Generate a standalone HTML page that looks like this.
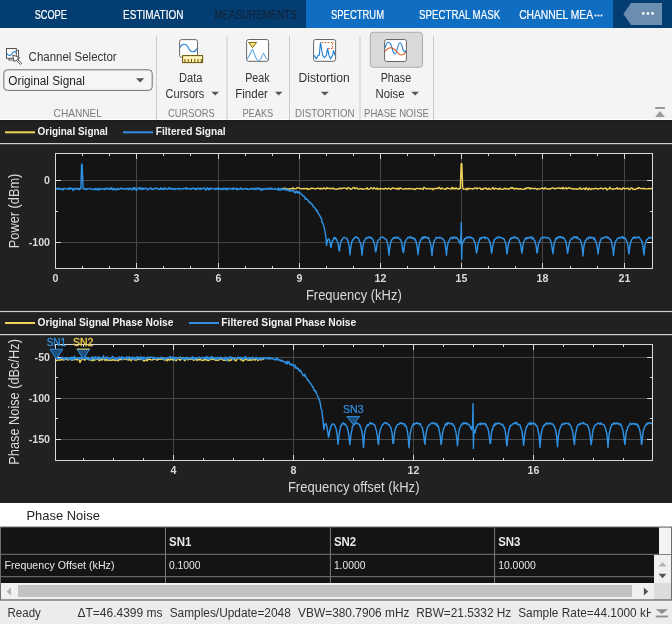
<!DOCTYPE html>
<html><head><meta charset="utf-8"><style>
html,body{margin:0;padding:0;width:672px;height:624px;overflow:hidden;background:#212121}
svg{display:block;will-change:transform}
text{font-family:"Liberation Sans", sans-serif}
</style></head><body>
<svg width="672" height="624" viewBox="0 0 672 624">
<rect x="0" y="0" width="672" height="28" fill="#043d72"/>
<rect x="306" y="0" width="307" height="28" fill="#106ec2"/>
<text x="34.7" y="19.3" font-size="12" fill="#ffffff" font-weight="400" text-anchor="start" textLength="32.2" lengthAdjust="spacingAndGlyphs" stroke="#ffffff" stroke-width="0.2">SCOPE</text>
<text x="123.1" y="19.3" font-size="12" fill="#ffffff" font-weight="400" text-anchor="start" textLength="60.3" lengthAdjust="spacingAndGlyphs" stroke="#ffffff" stroke-width="0.2">ESTIMATION</text>
<text x="214.5" y="19.3" font-size="12" fill="#13253b" font-weight="400" text-anchor="start" textLength="82.2" lengthAdjust="spacingAndGlyphs" stroke="#13253b" stroke-width="0.25">MEASUREMENTS</text>
<text x="331" y="19.3" font-size="12" fill="#ffffff" font-weight="400" text-anchor="start" textLength="53" lengthAdjust="spacingAndGlyphs" stroke="#ffffff" stroke-width="0.2">SPECTRUM</text>
<text x="419.1" y="19.3" font-size="12" fill="#ffffff" font-weight="400" text-anchor="start" textLength="81" lengthAdjust="spacingAndGlyphs" stroke="#ffffff" stroke-width="0.2">SPECTRAL MASK</text>
<text x="519.2" y="19.3" font-size="12" fill="#ffffff" font-weight="400" text-anchor="start" textLength="73.8" lengthAdjust="spacingAndGlyphs" stroke="#ffffff" stroke-width="0.2">CHANNEL MEA</text>
<rect x="594.6" y="14.6" width="1.8" height="1.8" fill="#fff"/><rect x="597.6" y="14.6" width="1.8" height="1.8" fill="#fff"/><rect x="600.6" y="14.6" width="1.8" height="1.8" fill="#fff"/>
<path d="M623.4 14 L631 3 L662 3 L662 25 L631 25 Z" fill="#6a8db0"/>
<circle cx="643.3" cy="13.4" r="1.35" fill="#fff"/><circle cx="647.9" cy="13.4" r="1.35" fill="#fff"/><circle cx="652.6" cy="13.4" r="1.35" fill="#fff"/>
<rect x="0" y="28" width="672" height="92" fill="#f4f4f4"/>
<rect x="0" y="119" width="672" height="1.3" fill="#ffffff"/>
<rect x="156" y="36" width="1" height="84" fill="#cbcbcb"/>
<rect x="226.5" y="36" width="1" height="84" fill="#cbcbcb"/>
<rect x="289" y="36" width="1" height="84" fill="#cbcbcb"/>
<rect x="359.5" y="36" width="1" height="84" fill="#cbcbcb"/>
<rect x="433" y="36" width="1" height="84" fill="#cbcbcb"/>
<rect x="8.9" y="50.4" width="9.6" height="9.6" fill="#fff" stroke="#555" stroke-width="1"/>
<rect x="6.5" y="48.5" width="9.8" height="9.8" fill="#fff" stroke="#555" stroke-width="1"/>
<path d="M7 53.5 C8.5 56 10.5 56.2 12 53.5 C13 51.5 15 51 16 52.5" fill="none" stroke="#1f7fd0" stroke-width="1.1"/>
<path d="M12.7 55 L19.6 57.6 L17.3 59.0 L21.8 63.2 L20.4 64.4 L16.1 60.2 L14.2 61.8 Z" fill="#fff" stroke="#444" stroke-width="0.9" stroke-linejoin="round"/>
<text x="28.6" y="61" font-size="12.5" fill="#333333" font-weight="400" text-anchor="start" textLength="88.1" lengthAdjust="spacingAndGlyphs" >Channel Selector</text>
<rect x="3.8" y="69.8" width="148.4" height="20.6" rx="3.5" fill="#f5f5f5" stroke="#6e6e6e" stroke-width="1"/>
<text x="8.3" y="85.2" font-size="12.5" fill="#222222" font-weight="400" text-anchor="start" textLength="76.7" lengthAdjust="spacingAndGlyphs" >Original Signal</text>
<path d="M136 78.2 L144.2 78.2 L140.1 82.4 Z" fill="#555"/>
<text x="53.6" y="116.9" font-size="11" fill="#7b7b7b" font-weight="400" text-anchor="start" textLength="48.3" lengthAdjust="spacingAndGlyphs" >CHANNEL</text>
<rect x="179.6" y="39.6" width="17.9" height="17.6" rx="2" fill="#fff" stroke="#666" stroke-width="1"/>
<path d="M180 47.5 C182 43 186.5 43 188.5 48 C190.5 53 195 53 197 48.5" fill="none" stroke="#1f7fd0" stroke-width="1.1"/>
<rect x="182.6" y="55.6" width="20" height="7" fill="#fff3b8" stroke="#6b5300" stroke-width="1"/>
<rect x="184.50" y="59" width="1" height="3.5" fill="#6b5300"/>
<rect x="187.75" y="59" width="1" height="3.5" fill="#6b5300"/>
<rect x="191.00" y="59" width="1" height="3.5" fill="#6b5300"/>
<rect x="194.25" y="59" width="1" height="3.5" fill="#6b5300"/>
<rect x="197.50" y="59" width="1" height="3.5" fill="#6b5300"/>
<rect x="200.75" y="59" width="1" height="3.5" fill="#6b5300"/>
<text x="179" y="82.3" font-size="12.5" fill="#333333" font-weight="400" text-anchor="start" textLength="23.4" lengthAdjust="spacingAndGlyphs" >Data</text>
<text x="165.5" y="97.5" font-size="12.5" fill="#333333" font-weight="400" text-anchor="start" textLength="38.8" lengthAdjust="spacingAndGlyphs" >Cursors</text>
<path d="M211.4 91.8 L219 91.8 L215.2 95.6 Z" fill="#555"/>
<text x="167.9" y="116.9" font-size="11" fill="#7b7b7b" font-weight="400" text-anchor="start" textLength="46.9" lengthAdjust="spacingAndGlyphs" >CURSORS</text>
<rect x="246.6" y="39.5" width="22" height="21.8" rx="2" fill="#fff" stroke="#666" stroke-width="1"/>
<path d="M247 59 C249.5 57 251 51 252.5 49.3 C254 51 255.5 60.5 258.7 60.5 C261.5 60.5 262.5 53.2 263.5 53.2 C264.5 55.5 266 59 268 59.5" fill="none" stroke="#3a94e0" stroke-width="1"/>
<path d="M248.6 42.5 L256.6 42.5 L252.6 47.6 Z" fill="#f7e27a" stroke="#7a5d00" stroke-width="0.9"/>
<text x="245.2" y="82.3" font-size="12.5" fill="#333333" font-weight="400" text-anchor="start" textLength="24.3" lengthAdjust="spacingAndGlyphs" >Peak</text>
<text x="235.2" y="97.5" font-size="12.5" fill="#333333" font-weight="400" text-anchor="start" textLength="32.7" lengthAdjust="spacingAndGlyphs" >Finder</text>
<path d="M275 91.8 L282.4 91.8 L278.7 95.6 Z" fill="#555"/>
<text x="242.4" y="116.9" font-size="11" fill="#7b7b7b" font-weight="400" text-anchor="start" textLength="30.9" lengthAdjust="spacingAndGlyphs" >PEAKS</text>
<rect x="313.6" y="39.5" width="22" height="21.8" rx="2" fill="#fff" stroke="#666" stroke-width="1"/>
<path d="M314 55.4 L316.4 58.6 L318 55.4 L319.3 55 L320.5 42.3 L322.5 55 L324.5 57.5 L326.5 55 L327.5 48.3 L329 55.4 L330.5 58.6 L332.5 55.6 L333.5 50.5 L335 55.4" fill="none" stroke="#1f7fd0" stroke-width="1.1"/>
<path d="M321.5 42.5 L334 42.5 M332.6 43 L332.6 48.3 M328 48.5 L334 48.5" fill="none" stroke="#e05a1a" stroke-width="1" stroke-dasharray="1.6 1.4"/>
<text x="298.6" y="82.3" font-size="12.5" fill="#333333" font-weight="400" text-anchor="start" textLength="51.2" lengthAdjust="spacingAndGlyphs" >Distortion</text>
<path d="M320.9 91.8 L328.8 91.8 L324.85 95.6 Z" fill="#555"/>
<text x="295" y="116.9" font-size="11" fill="#7b7b7b" font-weight="400" text-anchor="start" textLength="59.5" lengthAdjust="spacingAndGlyphs" >DISTORTION</text>
<rect x="370.3" y="32.3" width="52.2" height="35" rx="3" fill="#d9d9d9" stroke="#ababab" stroke-width="1"/>
<rect x="384.6" y="39.5" width="21.8" height="22" rx="2" fill="#fff" stroke="#666" stroke-width="1"/>
<path d="M385 48 C387 40 390 40.5 392 48 C394 56 396 56 397.5 48 C399 41 401 41 402.5 48 C404 53 405.5 53 406 50" fill="none" stroke="#1f7fd0" stroke-width="1.1"/>
<path d="M385 51.5 C389 46 393 47 397 52 C400 56 403 56 406 52" fill="none" stroke="#e05a1a" stroke-width="1.1"/>
<text x="380.7" y="82.3" font-size="12.5" fill="#333333" font-weight="400" text-anchor="start" textLength="30.5" lengthAdjust="spacingAndGlyphs" >Phase</text>
<text x="375.5" y="97.5" font-size="12.5" fill="#333333" font-weight="400" text-anchor="start" textLength="29" lengthAdjust="spacingAndGlyphs" >Noise</text>
<path d="M411.2 91.8 L419 91.8 L415.1 95.6 Z" fill="#555"/>
<text x="364" y="116.9" font-size="11" fill="#7b7b7b" font-weight="400" text-anchor="start" textLength="65" lengthAdjust="spacingAndGlyphs" >PHASE NOISE</text>
<rect x="655.2" y="107" width="9.7" height="2" fill="#9a9a9a"/><path d="M655.2 117 L664.9 117 L660.05 111 Z" fill="#9a9a9a"/>
<rect x="0" y="120.3" width="672" height="382.7" fill="#212121"/>
<rect x="0" y="120.3" width="672" height="1" fill="#161616"/>
<rect x="5" y="131.3" width="30" height="2" fill="#f0d458"/>
<text x="37.5" y="135.1" font-size="10" fill="#f2f2f2" font-weight="700" text-anchor="start" textLength="70.4" lengthAdjust="spacingAndGlyphs" >Original Signal</text>
<rect x="123" y="131.3" width="30" height="2" fill="#2f8fe0"/>
<text x="155.7" y="135.1" font-size="10" fill="#f2f2f2" font-weight="700" text-anchor="start" textLength="70" lengthAdjust="spacingAndGlyphs" >Filtered Signal</text>
<rect x="0" y="143" width="672" height="1.2" fill="#cfcfcf"/>
<rect x="5" y="322" width="30" height="2" fill="#f0d458"/>
<text x="37.5" y="326.0" font-size="10" fill="#f2f2f2" font-weight="700" text-anchor="start" textLength="135.9" lengthAdjust="spacingAndGlyphs" >Original Signal Phase Noise</text>
<rect x="189" y="322" width="30" height="2" fill="#2f8fe0"/>
<text x="221.3" y="326.0" font-size="10" fill="#f2f2f2" font-weight="700" text-anchor="start" textLength="135" lengthAdjust="spacingAndGlyphs" >Filtered Signal Phase Noise</text>
<rect x="0" y="310.9" width="672" height="1.2" fill="#cfcfcf"/>
<rect x="0" y="334" width="672" height="1.2" fill="#cfcfcf"/>
<rect x="55" y="153" width="598" height="115" fill="#141414"/>
<rect x="136" y="153" width="1" height="115" fill="#474747"/>
<rect x="218" y="153" width="1" height="115" fill="#474747"/>
<rect x="299" y="153" width="1" height="115" fill="#474747"/>
<rect x="380" y="153" width="1" height="115" fill="#474747"/>
<rect x="461" y="153" width="1" height="115" fill="#474747"/>
<rect x="542" y="153" width="1" height="115" fill="#474747"/>
<rect x="624" y="153" width="1" height="115" fill="#474747"/>
<rect x="55" y="180" width="598" height="1" fill="#474747"/>
<rect x="55" y="242" width="598" height="1" fill="#474747"/>
<defs><clipPath id="c1"><rect x="55" y="153" width="597" height="115"/></clipPath></defs>
<g clip-path="url(#c1)" fill="none" stroke-linejoin="round">
<path d="M281.00 188.47 L282.00 188.86 L283.00 188.49 L284.00 188.44 L285.00 188.13 L286.00 188.49 L287.00 189.16 L288.00 188.81 L289.00 189.12 L290.00 188.72 L291.00 188.80 L292.00 188.69 L293.00 187.77 L294.00 189.03 L295.00 188.85 L296.00 188.85 L297.00 187.75 L298.00 187.73 L299.00 188.16 L300.00 188.37 L301.00 188.75 L302.00 188.58 L303.00 188.86 L304.00 188.28 L305.00 188.75 L306.00 188.80 L307.00 188.27 L308.00 189.46 L309.00 188.88 L310.00 189.20 L311.00 188.29 L312.00 188.23 L313.00 188.43 L314.00 188.55 L315.00 188.92 L316.00 188.72 L317.00 188.38 L318.00 188.12 L319.00 188.34 L320.00 189.21 L321.00 188.20 L322.00 188.72 L323.00 188.81 L324.00 187.86 L325.00 188.62 L326.00 189.25 L327.00 187.59 L328.00 188.44 L329.00 188.55 L330.00 188.19 L331.00 188.85 L332.00 188.57 L333.00 187.87 L334.00 189.01 L335.00 188.93 L336.00 189.07 L337.00 189.32 L338.00 188.78 L339.00 188.66 L340.00 187.95 L341.00 188.91 L342.00 188.29 L343.00 188.37 L344.00 187.97 L345.00 188.12 L346.00 188.33 L347.00 189.24 L348.00 187.58 L349.00 187.87 L350.00 188.72 L351.00 189.32 L352.00 188.89 L353.00 187.65 L354.00 187.34 L355.00 188.78 L356.00 188.23 L357.00 188.04 L358.00 189.09 L359.00 189.15 L360.00 188.68 L361.00 188.72 L362.00 188.82 L363.00 189.40 L364.00 188.91 L365.00 188.86 L366.00 188.87 L367.00 187.82 L368.00 189.24 L369.00 189.08 L370.00 188.86 L371.00 187.61 L372.00 188.28 L373.00 189.02 L374.00 187.69 L375.00 188.51 L376.00 189.11 L377.00 187.94 L378.00 189.41 L379.00 188.88 L380.00 188.52 L381.00 188.76 L382.00 188.92 L383.00 188.66 L384.00 189.17 L385.00 188.27 L386.00 188.39 L387.00 189.12 L388.00 188.61 L389.00 188.16 L390.00 189.07 L391.00 189.33 L392.00 188.38 L393.00 187.91 L394.00 188.53 L395.00 188.53 L396.00 188.45 L397.00 189.30 L398.00 188.09 L399.00 189.23 L400.00 187.97 L401.00 188.21 L402.00 188.92 L403.00 189.16 L404.00 189.03 L405.00 188.77 L406.00 188.67 L407.00 188.68 L408.00 188.89 L409.00 188.51 L410.00 188.74 L411.00 188.89 L412.00 188.60 L413.00 188.98 L414.00 188.88 L415.00 189.61 L416.00 188.76 L417.00 188.39 L418.00 188.41 L419.00 188.59 L420.00 189.06 L421.00 188.43 L422.00 188.79 L423.00 189.52 L424.00 187.32 L425.00 188.04 L426.00 188.72 L427.00 188.80 L428.00 188.72 L429.00 188.38 L430.00 188.93 L431.00 188.74 L432.00 188.34 L433.00 189.82 L434.00 188.78 L435.00 188.32 L436.00 188.55 L437.00 188.49 L438.00 188.57 L439.00 187.24 L440.00 188.36 L441.00 189.10 L442.00 188.02 L443.00 188.57 L444.00 189.08 L445.00 189.03 L446.00 189.35 L447.00 187.75 L448.00 188.42 L449.00 188.43 L450.00 188.91 L451.00 189.15 L452.00 187.26 L453.00 189.14 L454.00 187.88 L455.00 188.94 L456.00 187.85 L457.00 188.69 L458.00 189.20 L459.00 188.53 L460.00 188.70 L460.30 188.30 L461.20 163.60 L461.80 163.60 L462.70 188.30 L463.00 188.56 L464.00 189.37 L465.00 189.12 L466.00 188.45 L467.00 189.97 L468.00 188.03 L469.00 189.06 L470.00 188.47 L471.00 188.67 L472.00 188.95 L473.00 188.71 L474.00 188.92 L475.00 187.84 L476.00 187.85 L477.00 188.91 L478.00 188.12 L479.00 188.09 L480.00 187.86 L481.00 189.23 L482.00 188.97 L483.00 189.34 L484.00 188.13 L485.00 188.60 L486.00 188.03 L487.00 188.98 L488.00 189.39 L489.00 188.15 L490.00 189.38 L491.00 189.09 L492.00 188.51 L493.00 187.61 L494.00 189.30 L495.00 188.55 L496.00 188.30 L497.00 188.80 L498.00 188.80 L499.00 189.35 L500.00 188.09 L501.00 189.17 L502.00 189.34 L503.00 189.33 L504.00 188.51 L505.00 188.23 L506.00 189.11 L507.00 188.66 L508.00 188.66 L509.00 189.31 L510.00 188.47 L511.00 187.45 L512.00 188.41 L513.00 187.67 L514.00 189.01 L515.00 188.76 L516.00 188.29 L517.00 188.60 L518.00 189.02 L519.00 188.64 L520.00 189.26 L521.00 188.57 L522.00 189.12 L523.00 189.35 L524.00 189.40 L525.00 188.26 L526.00 189.04 L527.00 187.66 L528.00 188.06 L529.00 187.62 L530.00 189.13 L531.00 187.98 L532.00 188.59 L533.00 188.50 L534.00 188.59 L535.00 188.30 L536.00 188.72 L537.00 189.50 L538.00 188.62 L539.00 188.87 L540.00 189.10 L541.00 188.50 L542.00 187.97 L543.00 188.32 L544.00 189.14 L545.00 187.78 L546.00 188.30 L547.00 189.10 L548.00 189.00 L549.00 188.60 L550.00 189.00 L551.00 188.68 L552.00 188.01 L553.00 187.82 L554.00 188.28 L555.00 189.06 L556.00 188.32 L557.00 188.15 L558.00 188.21 L559.00 187.83 L560.00 188.54 L561.00 188.01 L562.00 188.78 L563.00 187.42 L564.00 188.76 L565.00 188.28 L566.00 187.63 L567.00 188.96 L568.00 188.46 L569.00 187.48 L570.00 188.16 L571.00 188.75 L572.00 188.37 L573.00 188.99 L574.00 188.97 L575.00 188.93 L576.00 188.76 L577.00 189.27 L578.00 188.93 L579.00 188.83 L580.00 187.56 L581.00 189.05 L582.00 189.25 L583.00 188.45 L584.00 188.37 L585.00 189.57 L586.00 187.72 L587.00 188.83 L588.00 189.81 L589.00 188.14 L590.00 188.94 L591.00 189.54 L592.00 188.54 L593.00 188.88 L594.00 189.05 L595.00 188.15 L596.00 188.56 L597.00 188.75 L598.00 189.01 L599.00 188.58 L600.00 188.50 L601.00 188.09 L602.00 188.42 L603.00 189.05 L604.00 188.65 L605.00 188.17 L606.00 188.18 L607.00 189.93 L608.00 189.17 L609.00 188.92 L610.00 187.30 L611.00 188.91 L612.00 188.84 L613.00 189.44 L614.00 188.81 L615.00 188.57 L616.00 188.86 L617.00 187.63 L618.00 189.12 L619.00 188.76 L620.00 188.25 L621.00 189.26 L622.00 189.50 L623.00 187.90 L624.00 188.27 L625.00 188.75 L626.00 188.69 L627.00 188.40 L628.00 188.11 L629.00 189.66 L630.00 189.12 L631.00 188.00 L632.00 187.93 L633.00 189.45 L634.00 189.09 L635.00 189.51 L636.00 189.01 L637.00 188.16 L638.00 188.73 L639.00 187.52 L640.00 188.23 L641.00 188.57 L642.00 188.86 L643.00 188.24 L644.00 188.54 L645.00 188.83 L646.00 188.79 L647.00 188.92 L648.00 188.70 L649.00 188.44 L650.00 188.99 L651.00 188.62 L652.00 188.19" stroke="#f0d458" stroke-width="1.4"/>
<path d="M55.00 188.19 L55.50 188.99 L56.00 189.30 L56.50 188.54 L57.00 188.14 L57.50 188.77 L58.00 189.04 L58.50 189.35 L59.00 188.19 L59.50 188.15 L60.00 189.15 L60.50 189.04 L61.00 189.57 L61.50 189.29 L62.00 188.75 L62.50 188.66 L63.00 190.09 L63.50 188.66 L64.00 188.41 L64.50 188.23 L65.00 188.85 L65.50 188.87 L66.00 188.63 L66.50 188.77 L67.00 188.94 L67.50 189.15 L68.00 189.35 L68.50 188.90 L69.00 187.91 L69.50 189.15 L70.00 188.09 L70.50 188.71 L71.00 188.06 L71.50 188.80 L72.00 188.41 L72.50 188.91 L73.00 190.45 L73.50 188.78 L74.00 189.22 L74.50 188.14 L75.00 188.66 L75.50 189.13 L76.00 188.75 L76.50 188.99 L77.00 188.85 L77.50 188.30 L78.00 189.08 L78.50 188.39 L79.00 189.74 L79.50 188.55 L80.00 189.14 L80.50 188.80 L80.90 188.60 L81.60 164.20 L82.10 164.20 L83.10 188.60 L83.50 189.11 L84.00 188.87 L84.50 188.41 L85.00 189.18 L85.50 189.03 L86.00 189.62 L86.50 188.61 L87.00 189.08 L87.50 189.05 L88.00 188.94 L88.50 188.90 L89.00 188.89 L89.50 188.50 L90.00 188.29 L90.50 188.60 L91.00 189.10 L91.50 189.56 L92.00 189.29 L92.50 189.33 L93.00 189.19 L93.50 189.15 L94.00 188.89 L94.50 189.19 L95.00 189.69 L95.50 188.64 L96.00 188.45 L96.50 189.78 L97.00 188.92 L97.50 189.29 L98.00 189.24 L98.50 188.23 L99.00 190.02 L99.50 189.69 L100.00 188.89 L100.50 189.18 L101.00 188.86 L101.50 188.36 L102.00 188.74 L102.50 188.99 L103.00 189.36 L103.50 189.15 L104.00 188.83 L104.50 189.48 L105.00 188.42 L105.50 189.20 L106.00 189.36 L106.50 188.65 L107.00 187.90 L107.50 188.35 L108.00 188.92 L108.50 189.06 L109.00 189.57 L109.50 188.30 L110.00 188.80 L110.50 189.12 L111.00 188.72 L111.50 187.62 L112.00 189.20 L112.50 189.96 L113.00 189.30 L113.50 188.34 L114.00 188.59 L114.50 188.91 L115.00 190.04 L115.50 189.11 L116.00 188.86 L116.50 189.58 L117.00 188.76 L117.50 189.73 L118.00 188.46 L118.50 188.56 L119.00 189.16 L119.50 189.51 L120.00 189.13 L120.50 188.95 L121.00 187.89 L121.50 188.44 L122.00 188.49 L122.50 188.53 L123.00 189.09 L123.50 188.63 L124.00 189.19 L124.50 188.84 L125.00 188.63 L125.50 188.86 L126.00 189.01 L126.50 189.23 L127.00 188.56 L127.50 188.68 L128.00 188.12 L128.50 189.60 L129.00 189.53 L129.50 188.71 L130.00 188.56 L130.50 188.18 L131.00 188.88 L131.50 188.90 L132.00 189.89 L132.50 188.92 L133.00 188.41 L133.50 187.58 L134.00 189.50 L134.50 188.89 L135.00 188.00 L135.50 188.89 L136.00 188.00 L136.50 190.54 L137.00 189.36 L137.50 189.09 L138.00 188.71 L138.50 187.73 L139.00 188.74 L139.50 188.02 L140.00 189.10 L140.50 187.73 L141.00 188.35 L141.50 189.41 L142.00 189.62 L142.50 188.21 L143.00 188.03 L143.50 189.24 L144.00 189.23 L144.50 188.31 L145.00 188.45 L145.50 188.45 L146.00 188.21 L146.50 188.46 L147.00 189.43 L147.50 189.14 L148.00 189.83 L148.50 188.76 L149.00 188.73 L149.50 188.31 L150.00 188.74 L150.50 188.14 L151.00 187.91 L151.50 189.15 L152.00 189.52 L152.50 189.22 L153.00 189.47 L153.50 188.93 L154.00 188.44 L154.50 188.84 L155.00 188.61 L155.50 188.24 L156.00 187.95 L156.50 188.06 L157.00 188.80 L157.50 188.88 L158.00 188.56 L158.50 189.51 L159.00 188.89 L159.50 189.09 L160.00 189.41 L160.50 188.39 L161.00 187.82 L161.50 189.18 L162.00 188.46 L162.50 189.46 L163.00 188.97 L163.50 189.30 L164.00 189.18 L164.50 187.76 L165.00 189.16 L165.50 188.46 L166.00 188.42 L166.50 188.58 L167.00 189.18 L167.50 189.24 L168.00 189.31 L168.50 187.97 L169.00 188.50 L169.50 187.61 L170.00 188.75 L170.50 189.10 L171.00 188.42 L171.50 188.92 L172.00 188.92 L172.50 189.30 L173.00 188.39 L173.50 188.39 L174.00 188.42 L174.50 189.68 L175.00 189.35 L175.50 188.74 L176.00 188.91 L176.50 188.86 L177.00 188.90 L177.50 188.70 L178.00 188.63 L178.50 188.17 L179.00 188.48 L179.50 189.63 L180.00 189.07 L180.50 188.83 L181.00 188.69 L181.50 188.83 L182.00 188.98 L182.50 188.48 L183.00 188.90 L183.50 188.92 L184.00 188.43 L184.50 188.41 L185.00 188.30 L185.50 188.27 L186.00 189.24 L186.50 187.62 L187.00 188.67 L187.50 188.49 L188.00 188.49 L188.50 188.85 L189.00 189.36 L189.50 188.84 L190.00 188.73 L190.50 188.49 L191.00 188.74 L191.50 189.26 L192.00 188.60 L192.50 188.23 L193.00 188.17 L193.50 188.25 L194.00 188.11 L194.50 189.35 L195.00 188.98 L195.50 188.68 L196.00 189.53 L196.50 188.47 L197.00 189.18 L197.50 189.20 L198.00 188.03 L198.50 188.02 L199.00 188.34 L199.50 189.25 L200.00 189.45 L200.50 188.19 L201.00 189.32 L201.50 188.61 L202.00 188.60 L202.50 188.52 L203.00 188.64 L203.50 187.89 L204.00 188.30 L204.50 188.18 L205.00 189.05 L205.50 189.84 L206.00 190.17 L206.50 188.63 L207.00 187.94 L207.50 188.60 L208.00 188.33 L208.50 189.79 L209.00 189.09 L209.50 188.44 L210.00 189.27 L210.50 189.07 L211.00 187.99 L211.50 188.53 L212.00 188.68 L212.50 188.81 L213.00 188.87 L213.50 188.63 L214.00 188.89 L214.50 188.51 L215.00 188.35 L215.50 189.56 L216.00 188.98 L216.50 189.02 L217.00 188.00 L217.50 188.72 L218.00 189.21 L218.50 188.15 L219.00 189.35 L219.50 188.61 L220.00 189.00 L220.50 188.73 L221.00 188.91 L221.50 189.40 L222.00 188.60 L222.50 189.58 L223.00 188.41 L223.50 188.33 L224.00 189.16 L224.50 188.27 L225.00 188.61 L225.50 189.25 L226.00 189.41 L226.50 187.91 L227.00 189.05 L227.50 189.74 L228.00 189.40 L228.50 188.68 L229.00 188.50 L229.50 188.65 L230.00 188.22 L230.50 188.67 L231.00 188.71 L231.50 188.73 L232.00 189.39 L232.50 188.68 L233.00 188.07 L233.50 189.33 L234.00 188.26 L234.50 188.58 L235.00 188.73 L235.50 188.63 L236.00 188.30 L236.50 188.68 L237.00 189.89 L237.50 188.50 L238.00 188.73 L238.50 189.36 L239.00 189.17 L239.50 189.18 L240.00 189.23 L240.50 187.82 L241.00 188.37 L241.50 188.86 L242.00 189.05 L242.50 189.45 L243.00 189.03 L243.50 188.68 L244.00 188.82 L244.50 188.69 L245.00 188.92 L245.50 189.14 L246.00 188.63 L246.50 188.39 L247.00 188.37 L247.50 189.35 L248.00 189.44 L248.50 189.30 L249.00 189.23 L249.50 189.22 L250.00 188.80 L250.50 189.13 L251.00 188.27 L251.50 188.70 L252.00 188.43 L252.50 189.16 L253.00 188.51 L253.50 188.75 L254.00 189.00 L254.50 189.48 L255.00 188.40 L255.50 188.33 L256.00 189.21 L256.50 188.25 L257.00 189.03 L257.50 188.51 L258.00 188.75 L258.50 187.89 L259.00 189.16 L259.50 188.56 L260.00 188.37 L260.50 189.86 L261.00 189.18 L261.50 190.59 L262.00 189.05 L262.50 188.68 L263.00 188.92 L263.50 189.68 L264.00 188.87 L264.50 189.12 L265.00 189.17 L265.50 188.46 L266.00 188.99 L266.50 188.69 L267.00 188.33 L267.50 189.40 L268.00 189.30 L268.50 189.02 L269.00 188.54 L269.50 188.00 L270.00 189.26 L270.50 188.98 L271.00 188.19 L271.50 189.02 L272.00 188.30 L272.50 189.05 L273.00 189.15 L273.50 189.27 L274.00 189.21 L274.50 189.20 L275.00 188.55 L275.50 188.94 L276.00 188.89 L276.50 189.03 L277.00 189.30 L277.50 189.48 L278.00 190.00 L278.50 187.91 L279.00 189.41 L279.50 189.12 L280.00 190.37 L280.50 189.70 L281.00 188.42 L281.50 189.47 L282.00 189.04 L282.50 189.84 L283.00 188.86 L283.50 189.39 L284.00 189.44 L284.50 189.52 L285.00 189.36 L285.50 188.82 L286.00 190.06 L286.50 190.43 L287.00 190.00 L287.50 189.63 L288.00 190.34 L288.50 190.63 L289.00 190.36 L289.50 190.54 L290.00 191.36 L290.50 190.19 L291.00 190.58 L291.50 190.01 L292.00 190.71 L292.50 190.79 L293.00 190.79 L293.50 191.02 L294.00 192.37 L294.50 191.48 L295.00 191.62 L295.50 192.88 L296.00 191.85 L296.50 191.12 L297.00 192.29 L297.50 191.72 L298.00 193.15 L298.50 191.89 L299.00 192.43 L299.50 192.17 L300.00 193.29 L300.50 193.06 L301.00 193.89 L301.50 194.12 L302.00 194.42 L302.50 195.65 L303.00 196.14 L303.50 196.20 L304.00 196.21 L304.50 196.62 L305.00 197.79 L305.50 199.34 L306.00 198.41 L306.50 198.74 L307.00 199.28 L307.50 199.58 L308.00 200.14 L308.50 201.02 L309.00 202.35 L309.50 202.15 L310.00 202.41 L310.50 202.38 L311.00 203.81 L311.50 204.22 L312.00 204.16 L312.50 204.76 L313.00 205.83 L313.50 206.90 L314.00 207.25 L314.50 207.60 L315.00 207.92 L315.50 208.88 L316.00 209.37 L316.50 211.16 L317.00 210.24 L317.50 211.39 L318.00 213.02 L318.50 213.10 L319.00 214.82 L319.50 215.06 L320.00 216.21 L320.50 217.05 L321.00 217.69 L321.50 219.08 L322.00 222.03 L322.50 222.76 L323.00 223.60 L323.50 225.28 L324.00 226.58 L324.50 229.19 L325.00 231.52 L325.50 234.52 L326.00 238.09 L326.50 245.64 L327.00 242.36 L327.50 240.81 L328.00 239.26 L328.50 238.91 L329.00 238.99 L329.50 240.08 L330.00 242.33 L330.50 245.97 L331.00 247.51 L331.50 244.50 L332.00 242.24 L332.50 240.81 L333.00 239.98 L333.50 239.40 L334.00 237.48 L334.50 238.47 L335.00 237.64 L335.50 237.85 L336.00 239.49 L336.50 238.98 L337.00 240.88 L337.50 241.81 L338.00 242.85 L338.50 246.31 L339.00 250.42 L339.50 251.06 L340.00 245.84 L340.50 243.82 L341.00 241.85 L341.50 240.01 L342.00 240.31 L342.50 238.66 L343.00 238.08 L343.50 237.76 L344.00 237.31 L344.50 237.17 L345.00 237.64 L345.50 237.93 L346.00 237.86 L346.50 238.49 L347.00 238.54 L347.50 240.29 L348.00 240.98 L348.50 243.21 L349.00 245.28 L349.50 249.17 L350.00 254.90 L350.50 248.88 L351.00 246.86 L351.50 243.19 L352.00 241.40 L352.50 239.85 L353.00 240.01 L353.50 239.28 L354.00 238.33 L354.50 237.26 L355.00 237.43 L355.50 237.78 L356.00 237.20 L356.50 236.98 L357.00 237.13 L357.50 237.54 L358.00 238.23 L358.50 238.39 L359.00 239.35 L359.50 241.50 L360.00 242.33 L360.50 242.89 L361.00 246.13 L361.50 249.80 L362.00 255.24 L362.50 250.27 L363.00 245.89 L363.50 243.30 L364.00 241.48 L364.50 240.34 L365.00 240.06 L365.50 239.18 L366.00 237.76 L366.50 237.82 L367.00 237.41 L367.50 237.96 L368.00 237.57 L368.50 237.80 L369.00 237.35 L369.50 236.58 L370.00 237.74 L370.50 237.79 L371.00 238.14 L371.50 237.63 L372.00 238.67 L372.50 238.89 L373.00 239.68 L373.50 241.25 L374.00 242.81 L374.50 244.48 L375.00 247.35 L375.50 251.73 L376.00 251.49 L376.50 247.87 L377.00 244.33 L377.50 241.25 L378.00 240.42 L378.50 239.96 L379.00 239.79 L379.50 239.03 L380.00 238.28 L380.50 237.92 L381.00 237.15 L381.50 237.29 L382.00 237.26 L382.50 237.04 L383.00 237.48 L383.50 237.39 L384.00 237.89 L384.50 238.63 L385.00 238.66 L385.50 238.99 L386.00 239.34 L386.50 239.67 L387.00 241.57 L387.50 243.67 L388.00 245.57 L388.50 250.35 L389.00 255.15 L389.50 249.97 L390.00 245.91 L390.50 242.91 L391.00 242.61 L391.50 239.90 L392.00 239.94 L392.50 238.63 L393.00 238.54 L393.50 237.70 L394.00 237.62 L394.50 238.04 L395.00 238.37 L395.50 237.03 L396.00 237.36 L396.50 237.80 L397.00 237.15 L397.50 237.86 L398.00 237.34 L398.50 238.18 L399.00 238.39 L399.50 239.13 L400.00 239.28 L400.50 239.31 L401.00 241.17 L401.50 241.82 L402.00 244.73 L402.50 248.07 L403.00 252.02 L403.50 252.60 L404.00 248.68 L404.50 244.99 L405.00 242.14 L405.50 240.99 L406.00 240.69 L406.50 239.14 L407.00 238.76 L407.50 238.14 L408.00 237.23 L408.50 237.53 L409.00 237.75 L409.50 237.57 L410.00 237.32 L410.50 236.39 L411.00 237.91 L411.50 237.74 L412.00 237.97 L412.50 238.24 L413.00 237.64 L413.50 237.82 L414.00 238.58 L414.50 239.67 L415.00 238.80 L415.50 240.34 L416.00 241.38 L416.50 243.74 L417.00 246.72 L417.50 249.68 L418.00 254.74 L418.50 249.82 L419.00 245.92 L419.50 242.76 L420.00 242.06 L420.50 240.17 L421.00 239.81 L421.50 238.27 L422.00 238.88 L422.50 237.40 L423.00 238.27 L423.50 236.79 L424.00 238.10 L424.50 237.23 L425.00 236.66 L425.50 237.30 L426.00 237.63 L426.50 237.16 L427.00 237.57 L427.50 238.16 L428.00 238.31 L428.50 237.48 L429.00 239.31 L429.50 240.59 L430.00 241.80 L430.50 243.91 L431.00 245.73 L431.50 250.95 L432.00 255.66 L432.50 249.95 L433.00 246.55 L433.50 243.91 L434.00 241.74 L434.50 240.15 L435.00 240.00 L435.50 239.09 L436.00 237.58 L436.50 237.58 L437.00 238.04 L437.50 237.69 L438.00 237.63 L438.50 237.70 L439.00 237.43 L439.50 238.07 L440.00 237.15 L440.50 237.32 L441.00 237.78 L441.50 238.16 L442.00 238.44 L442.50 239.10 L443.00 238.68 L443.50 240.07 L444.00 240.64 L444.50 241.22 L445.00 243.42 L445.50 247.00 L446.00 250.16 L446.50 255.09 L447.00 248.73 L447.50 245.74 L448.00 243.18 L448.50 241.74 L449.00 241.49 L449.50 239.90 L450.00 239.06 L450.50 238.03 L451.00 237.57 L451.50 237.75 L452.00 237.45 L452.50 238.87 L453.00 237.24 L453.50 237.09 L454.00 237.85 L454.50 237.42 L455.00 236.90 L455.50 238.15 L456.00 237.59 L456.50 237.34 L457.00 238.38 L457.50 238.84 L458.00 239.00 L458.50 240.20 L459.00 241.27 L459.50 241.95 L460.00 243.48 L460.90 237.50 L461.30 222.40 L461.70 259.00 L462.10 244.00 L463.50 241.19 L464.00 240.57 L464.50 238.63 L465.00 239.07 L465.50 238.52 L466.00 237.99 L466.50 237.61 L467.00 237.13 L467.50 237.57 L468.00 237.99 L468.50 237.20 L469.00 237.57 L469.50 237.06 L470.00 237.53 L470.50 237.05 L471.00 237.80 L471.50 237.71 L472.00 238.18 L472.50 238.07 L473.00 238.23 L473.50 239.17 L474.00 240.56 L474.50 241.90 L475.00 242.58 L475.50 245.30 L476.00 248.50 L476.50 253.03 L477.00 251.06 L477.50 247.55 L478.00 243.98 L478.50 242.88 L479.00 241.27 L479.50 240.17 L480.00 238.03 L480.50 238.92 L481.00 238.56 L481.50 237.38 L482.00 238.18 L482.50 237.61 L483.00 237.38 L483.50 237.07 L484.00 236.89 L484.50 237.16 L485.00 238.79 L485.50 237.58 L486.00 237.70 L486.50 237.49 L487.00 237.73 L487.50 238.07 L488.00 238.33 L488.50 239.69 L489.00 239.95 L489.50 241.55 L490.00 242.19 L490.50 245.35 L491.00 248.14 L491.50 253.15 L492.00 251.72 L492.50 247.01 L493.00 244.98 L493.50 242.18 L494.00 240.87 L494.50 239.52 L495.00 239.29 L495.50 238.49 L496.00 238.40 L496.50 238.14 L497.00 237.46 L497.50 236.97 L498.00 237.68 L498.50 237.82 L499.00 237.67 L499.50 236.82 L500.00 237.64 L500.50 237.60 L501.00 237.65 L501.50 237.86 L502.00 237.70 L502.50 238.19 L503.00 238.83 L503.50 238.63 L504.00 238.81 L504.50 240.24 L505.00 241.54 L505.50 242.28 L506.00 245.19 L506.50 249.22 L507.00 253.96 L507.50 250.79 L508.00 246.14 L508.50 244.34 L509.00 242.80 L509.50 240.57 L510.00 239.38 L510.50 238.50 L511.00 238.93 L511.50 238.20 L512.00 237.53 L512.50 238.23 L513.00 237.88 L513.50 237.71 L514.00 236.58 L514.50 237.30 L515.00 237.66 L515.50 236.90 L516.00 237.98 L516.50 238.36 L517.00 238.40 L517.50 237.90 L518.00 238.30 L518.50 239.57 L519.00 240.32 L519.50 241.45 L520.00 242.88 L520.50 244.36 L521.00 247.21 L521.50 250.92 L522.00 253.21 L522.50 249.18 L523.00 244.73 L523.50 242.51 L524.00 241.48 L524.50 240.27 L525.00 238.71 L525.50 238.44 L526.00 237.85 L526.50 238.95 L527.00 237.48 L527.50 238.02 L528.00 238.37 L528.50 238.27 L529.00 238.00 L529.50 238.07 L530.00 236.80 L530.50 237.26 L531.00 237.18 L531.50 237.50 L532.00 238.98 L532.50 237.28 L533.00 238.60 L533.50 238.20 L534.00 239.92 L534.50 240.68 L535.00 240.95 L535.50 243.66 L536.00 244.98 L536.50 248.74 L537.00 252.99 L537.50 251.51 L538.00 247.25 L538.50 244.39 L539.00 242.66 L539.50 241.01 L540.00 241.00 L540.50 239.13 L541.00 238.48 L541.50 237.97 L542.00 237.66 L542.50 237.14 L543.00 237.18 L543.50 237.91 L544.00 237.44 L544.50 237.28 L545.00 237.49 L545.50 237.83 L546.00 237.68 L546.50 237.83 L547.00 237.34 L547.50 237.63 L548.00 237.61 L548.50 238.19 L549.00 238.23 L549.50 238.93 L550.00 239.70 L550.50 240.62 L551.00 241.94 L551.50 243.75 L552.00 247.32 L552.50 250.60 L553.00 253.57 L553.50 249.03 L554.00 244.98 L554.50 242.60 L555.00 241.46 L555.50 239.50 L556.00 237.97 L556.50 238.94 L557.00 238.84 L557.50 237.29 L558.00 237.40 L558.50 237.89 L559.00 236.60 L559.50 237.02 L560.00 236.82 L560.50 237.26 L561.00 236.51 L561.50 237.88 L562.00 237.53 L562.50 237.90 L563.00 237.84 L563.50 237.35 L564.00 238.65 L564.50 238.68 L565.00 240.07 L565.50 240.77 L566.00 242.56 L566.50 244.83 L567.00 248.49 L567.50 253.19 L568.00 251.31 L568.50 247.40 L569.00 245.08 L569.50 242.59 L570.00 240.60 L570.50 239.86 L571.00 239.03 L571.50 239.08 L572.00 238.28 L572.50 238.15 L573.00 238.75 L573.50 236.98 L574.00 237.02 L574.50 236.62 L575.00 236.63 L575.50 237.73 L576.00 237.51 L576.50 238.18 L577.00 236.66 L577.50 237.29 L578.00 238.53 L578.50 238.60 L579.00 238.89 L579.50 239.35 L580.00 239.61 L580.50 240.48 L581.00 241.75 L581.50 243.89 L582.00 246.01 L582.50 249.96 L583.00 255.95 L583.50 249.31 L584.00 245.74 L584.50 243.76 L585.00 241.60 L585.50 240.40 L586.00 240.53 L586.50 239.13 L587.00 238.29 L587.50 238.62 L588.00 239.00 L588.50 237.18 L589.00 237.23 L589.50 237.49 L590.00 237.09 L590.50 238.32 L591.00 237.60 L591.50 237.24 L592.00 237.73 L592.50 237.29 L593.00 237.55 L593.50 238.12 L594.00 239.47 L594.50 237.82 L595.00 239.63 L595.50 240.88 L596.00 241.77 L596.50 243.96 L597.00 245.69 L597.50 249.02 L598.00 253.97 L598.50 250.37 L599.00 247.46 L599.50 243.42 L600.00 241.99 L600.50 240.47 L601.00 239.40 L601.50 238.08 L602.00 238.41 L602.50 238.27 L603.00 238.00 L603.50 238.11 L604.00 237.50 L604.50 237.18 L605.00 237.53 L605.50 237.65 L606.00 236.93 L606.50 236.70 L607.00 236.99 L607.50 238.03 L608.00 238.14 L608.50 237.49 L609.00 238.20 L609.50 238.87 L610.00 239.56 L610.50 239.31 L611.00 240.38 L611.50 242.37 L612.00 244.60 L612.50 246.77 L613.00 249.31 L613.50 255.50 L614.00 249.69 L614.50 246.06 L615.00 243.22 L615.50 241.52 L616.00 240.48 L616.50 240.41 L617.00 239.28 L617.50 238.69 L618.00 238.16 L618.50 237.55 L619.00 237.59 L619.50 238.11 L620.00 237.82 L620.50 238.26 L621.00 237.46 L621.50 237.34 L622.00 236.66 L622.50 237.64 L623.00 236.80 L623.50 238.42 L624.00 237.65 L624.50 238.21 L625.00 237.97 L625.50 238.85 L626.00 239.34 L626.50 241.21 L627.00 242.16 L627.50 243.43 L628.00 245.85 L628.50 250.72 L629.00 253.81 L629.50 248.45 L630.00 245.75 L630.50 243.01 L631.00 241.48 L631.50 240.00 L632.00 239.17 L632.50 238.62 L633.00 237.67 L633.50 238.34 L634.00 238.00 L634.50 236.86 L635.00 237.55 L635.50 237.94 L636.00 237.47 L636.50 237.93 L637.00 237.26 L637.50 237.45 L638.00 236.97 L638.50 237.30 L639.00 237.09 L639.50 237.78 L640.00 238.66 L640.50 239.28 L641.00 240.25 L641.50 240.74 L642.00 241.58 L642.50 244.14 L643.00 246.65 L643.50 251.55 L644.00 254.91 L644.50 249.38 L645.00 244.97 L645.50 242.86 L646.00 241.52 L646.50 239.95 L647.00 239.67 L647.50 239.15 L648.00 238.77 L648.50 238.17 L649.00 237.43 L649.50 237.26 L650.00 237.46 L650.50 238.02 L651.00 238.07 L651.50 237.78 L652.00 237.54" stroke="#2f8fe0" stroke-width="1.45"/>
</g>
<rect x="55" y="153" width="598" height="1" fill="#d8d8d8"/>
<rect x="55" y="268" width="598" height="1" fill="#d8d8d8"/>
<rect x="55" y="153" width="1" height="116" fill="#d8d8d8"/>
<rect x="652" y="153" width="1" height="116" fill="#d8d8d8"/>
<rect x="136" y="153" width="1" height="6" fill="#d8d8d8"/>
<rect x="136" y="263" width="1" height="6" fill="#d8d8d8"/>
<rect x="218" y="153" width="1" height="6" fill="#d8d8d8"/>
<rect x="218" y="263" width="1" height="6" fill="#d8d8d8"/>
<rect x="299" y="153" width="1" height="6" fill="#d8d8d8"/>
<rect x="299" y="263" width="1" height="6" fill="#d8d8d8"/>
<rect x="380" y="153" width="1" height="6" fill="#d8d8d8"/>
<rect x="380" y="263" width="1" height="6" fill="#d8d8d8"/>
<rect x="461" y="153" width="1" height="6" fill="#d8d8d8"/>
<rect x="461" y="263" width="1" height="6" fill="#d8d8d8"/>
<rect x="542" y="153" width="1" height="6" fill="#d8d8d8"/>
<rect x="542" y="263" width="1" height="6" fill="#d8d8d8"/>
<rect x="624" y="153" width="1" height="6" fill="#d8d8d8"/>
<rect x="624" y="263" width="1" height="6" fill="#d8d8d8"/>
<rect x="82" y="153" width="1" height="3" fill="#d8d8d8"/>
<rect x="82" y="266" width="1" height="3" fill="#d8d8d8"/>
<rect x="109" y="153" width="1" height="3" fill="#d8d8d8"/>
<rect x="109" y="266" width="1" height="3" fill="#d8d8d8"/>
<rect x="163" y="153" width="1" height="3" fill="#d8d8d8"/>
<rect x="163" y="266" width="1" height="3" fill="#d8d8d8"/>
<rect x="190" y="153" width="1" height="3" fill="#d8d8d8"/>
<rect x="190" y="266" width="1" height="3" fill="#d8d8d8"/>
<rect x="245" y="153" width="1" height="3" fill="#d8d8d8"/>
<rect x="245" y="266" width="1" height="3" fill="#d8d8d8"/>
<rect x="272" y="153" width="1" height="3" fill="#d8d8d8"/>
<rect x="272" y="266" width="1" height="3" fill="#d8d8d8"/>
<rect x="326" y="153" width="1" height="3" fill="#d8d8d8"/>
<rect x="326" y="266" width="1" height="3" fill="#d8d8d8"/>
<rect x="353" y="153" width="1" height="3" fill="#d8d8d8"/>
<rect x="353" y="266" width="1" height="3" fill="#d8d8d8"/>
<rect x="407" y="153" width="1" height="3" fill="#d8d8d8"/>
<rect x="407" y="266" width="1" height="3" fill="#d8d8d8"/>
<rect x="434" y="153" width="1" height="3" fill="#d8d8d8"/>
<rect x="434" y="266" width="1" height="3" fill="#d8d8d8"/>
<rect x="488" y="153" width="1" height="3" fill="#d8d8d8"/>
<rect x="488" y="266" width="1" height="3" fill="#d8d8d8"/>
<rect x="515" y="153" width="1" height="3" fill="#d8d8d8"/>
<rect x="515" y="266" width="1" height="3" fill="#d8d8d8"/>
<rect x="570" y="153" width="1" height="3" fill="#d8d8d8"/>
<rect x="570" y="266" width="1" height="3" fill="#d8d8d8"/>
<rect x="597" y="153" width="1" height="3" fill="#d8d8d8"/>
<rect x="597" y="266" width="1" height="3" fill="#d8d8d8"/>
<rect x="55" y="180" width="6" height="1" fill="#d8d8d8"/>
<rect x="647" y="180" width="6" height="1" fill="#d8d8d8"/>
<rect x="55" y="242" width="6" height="1" fill="#d8d8d8"/>
<rect x="647" y="242" width="6" height="1" fill="#d8d8d8"/>
<rect x="55" y="211" width="3" height="1" fill="#d8d8d8"/>
<rect x="650" y="211" width="3" height="1" fill="#d8d8d8"/>
<text x="55.5" y="282" font-size="10.67" fill="#d9d9d9" font-weight="700" text-anchor="middle" >0</text>
<text x="136.5" y="282" font-size="10.67" fill="#d9d9d9" font-weight="700" text-anchor="middle" >3</text>
<text x="218.5" y="282" font-size="10.67" fill="#d9d9d9" font-weight="700" text-anchor="middle" >6</text>
<text x="299.5" y="282" font-size="10.67" fill="#d9d9d9" font-weight="700" text-anchor="middle" >9</text>
<text x="380.5" y="282" font-size="10.67" fill="#d9d9d9" font-weight="700" text-anchor="middle" >12</text>
<text x="461.5" y="282" font-size="10.67" fill="#d9d9d9" font-weight="700" text-anchor="middle" >15</text>
<text x="542.5" y="282" font-size="10.67" fill="#d9d9d9" font-weight="700" text-anchor="middle" >18</text>
<text x="624.5" y="282" font-size="10.67" fill="#d9d9d9" font-weight="700" text-anchor="middle" >21</text>
<text x="50" y="184.2" font-size="10.67" fill="#d9d9d9" font-weight="700" text-anchor="end" >0</text>
<text x="50" y="245.7" font-size="10.67" fill="#d9d9d9" font-weight="700" text-anchor="end" >-100</text>
<text x="305.9" y="300" font-size="14" fill="#d9d9d9" font-weight="400" text-anchor="start" textLength="95.9" lengthAdjust="spacingAndGlyphs" >Frequency (kHz)</text>
<text transform="translate(19.2 210.9) rotate(-90)" x="0" y="0" font-size="14" fill="#d9d9d9" text-anchor="middle" textLength="74.5" lengthAdjust="spacingAndGlyphs">Power (dBm)</text>
<rect x="55" y="344" width="598" height="116" fill="#141414"/>
<rect x="173" y="344" width="1" height="116" fill="#474747"/>
<rect x="293" y="344" width="1" height="116" fill="#474747"/>
<rect x="413" y="344" width="1" height="116" fill="#474747"/>
<rect x="533" y="344" width="1" height="116" fill="#474747"/>
<rect x="55" y="357" width="598" height="1" fill="#474747"/>
<rect x="55" y="398" width="598" height="1" fill="#474747"/>
<rect x="55" y="439" width="598" height="1" fill="#474747"/>
<defs><clipPath id="c2"><rect x="55" y="344" width="597" height="116"/></clipPath></defs>
<g clip-path="url(#c2)" fill="none" stroke-linejoin="round">
<path d="M55.00 360.11 L56.00 360.24 L57.00 360.66 L58.00 360.27 L59.00 358.12 L60.00 360.36 L61.00 359.85 L62.00 359.09 L63.00 359.97 L64.00 359.76 L65.00 359.45 L66.00 357.98 L67.00 359.60 L68.00 360.00 L69.00 359.46 L70.00 358.07 L71.00 359.91 L72.00 360.15 L73.00 359.66 L74.00 359.88 L75.00 359.18 L76.00 358.91 L77.00 359.97 L78.00 359.18 L79.00 359.66 L80.00 362.43 L81.00 360.14 L82.00 359.62 L83.00 358.04 L84.00 359.59 L85.00 360.18 L86.00 358.87 L87.00 359.29 L88.00 357.47 L89.00 360.00 L90.00 358.96 L91.00 360.12 L92.00 360.73 L93.00 359.35 L94.00 360.39 L95.00 359.73 L96.00 359.32 L97.00 359.25 L98.00 358.73 L99.00 360.66 L100.00 360.29 L101.00 358.59 L102.00 360.26 L103.00 358.84 L104.00 358.15 L105.00 360.58 L106.00 358.35 L107.00 360.57 L108.00 359.68 L109.00 360.31 L110.00 359.96 L111.00 360.54 L112.00 359.81 L113.00 360.02 L114.00 359.72 L115.00 360.49 L116.00 359.15 L117.00 360.41 L118.00 360.86 L119.00 359.44 L120.00 359.90 L121.00 359.04 L122.00 359.24 L123.00 359.73 L124.00 359.19 L125.00 358.70 L126.00 359.47 L127.00 359.67 L128.00 359.79 L129.00 360.14 L130.00 357.90 L131.00 360.77 L132.00 359.35 L133.00 358.81 L134.00 359.17 L135.00 359.90 L136.00 360.28 L137.00 359.17 L138.00 359.64 L139.00 358.06 L140.00 359.65 L141.00 359.40 L142.00 359.11 L143.00 360.30 L144.00 361.11 L145.00 360.43 L146.00 358.80 L147.00 360.88 L148.00 359.20 L149.00 359.46 L150.00 358.98 L151.00 359.91 L152.00 360.00 L153.00 359.63 L154.00 359.31 L155.00 359.37 L156.00 359.14 L157.00 360.37 L158.00 359.03 L159.00 359.37 L160.00 359.31 L161.00 358.83 L162.00 359.30 L163.00 358.18 L164.00 359.87 L165.00 359.99 L166.00 359.23 L167.00 360.90 L168.00 358.76 L169.00 360.00 L170.00 359.93 L171.00 359.02 L172.00 359.28 L173.00 360.30 L174.00 359.56 L175.00 359.75 L176.00 360.75 L177.00 359.69 L178.00 358.00 L179.00 358.84 L180.00 360.25 L181.00 359.38 L182.00 358.53 L183.00 357.73 L184.00 359.79 L185.00 360.85 L186.00 358.38 L187.00 357.56 L188.00 359.95 L189.00 359.02 L190.00 359.24 L191.00 359.21 L192.00 358.69 L193.00 359.89 L194.00 360.32 L195.00 359.83 L196.00 359.00 L197.00 360.43 L198.00 359.40 L199.00 360.02 L200.00 358.66 L201.00 360.09 L202.00 360.17 L203.00 360.65 L204.00 359.53 L205.00 359.90 L206.00 358.99 L207.00 360.29 L208.00 360.19 L209.00 360.47 L210.00 359.16 L211.00 358.41 L212.00 359.44 L213.00 359.32 L214.00 358.84 L215.00 360.04 L216.00 360.35 L217.00 359.85 L218.00 360.49 L219.00 359.85 L220.00 358.63 L221.00 358.98 L222.00 359.19 L223.00 360.11 L224.00 360.32 L225.00 359.62 L226.00 360.40 L227.00 358.77 L228.00 359.40 L229.00 360.83 L230.00 359.90 L231.00 360.43 L232.00 357.82 L233.00 358.02 L234.00 358.73 L235.00 360.40 L236.00 360.95 L237.00 358.95 L238.00 358.63 L239.00 358.60 L240.00 358.71 L241.00 360.00 L242.00 359.22 L243.00 361.17 L244.00 360.14 L245.00 358.89 L246.00 359.71 L247.00 359.37 L248.00 360.20 L249.00 360.31 L250.00 359.19 L251.00 360.29 L252.00 360.01 L253.00 359.43 L254.00 359.73 L255.00 360.11 L256.00 359.22 L257.00 358.90 L258.00 360.63 L259.00 359.51 L260.00 358.98 L261.00 359.91 L262.00 358.20 L263.00 359.55 L264.00 358.30" stroke="#f0d458" stroke-width="1.4"/>
<path d="M55.00 357.22 L55.50 357.24 L56.00 358.60 L56.50 356.38 L57.00 357.99 L57.50 356.41 L58.00 358.93 L58.50 358.25 L59.00 359.12 L59.50 357.72 L60.00 358.40 L60.50 357.89 L61.00 357.55 L61.50 358.21 L62.00 357.16 L62.50 357.83 L63.00 358.62 L63.50 358.14 L64.00 357.79 L64.50 359.74 L65.00 358.14 L65.50 357.66 L66.00 358.22 L66.50 357.71 L67.00 357.81 L67.50 357.84 L68.00 359.62 L68.50 358.12 L69.00 358.23 L69.50 358.61 L70.00 359.61 L70.50 357.93 L71.00 357.63 L71.50 359.96 L72.00 357.01 L72.50 357.82 L73.00 358.60 L73.50 359.81 L74.00 357.39 L74.50 356.28 L75.00 358.60 L75.50 357.71 L76.00 357.81 L76.50 358.45 L77.00 358.27 L77.50 358.32 L78.00 357.78 L78.50 359.07 L79.00 359.23 L79.50 358.12 L80.00 357.76 L80.50 358.65 L81.00 358.46 L81.50 357.32 L82.00 357.75 L82.50 358.89 L83.00 358.03 L83.50 357.85 L84.00 358.26 L84.50 358.07 L85.00 358.10 L85.50 356.65 L86.00 359.41 L86.50 358.25 L87.00 357.44 L87.50 358.83 L88.00 358.33 L88.50 358.11 L89.00 358.89 L89.50 359.80 L90.00 358.52 L90.50 359.29 L91.00 359.72 L91.50 357.33 L92.00 357.71 L92.50 358.68 L93.00 356.82 L93.50 357.90 L94.00 359.07 L94.50 358.88 L95.00 358.53 L95.50 356.68 L96.00 359.86 L96.50 358.51 L97.00 358.68 L97.50 358.47 L98.00 356.81 L98.50 357.02 L99.00 357.19 L99.50 359.54 L100.00 357.48 L100.50 357.92 L101.00 357.91 L101.50 358.53 L102.00 358.48 L102.50 358.30 L103.00 357.15 L103.50 355.75 L104.00 358.22 L104.50 358.30 L105.00 359.02 L105.50 358.02 L106.00 357.64 L106.50 358.41 L107.00 356.93 L107.50 357.32 L108.00 357.35 L108.50 358.32 L109.00 359.67 L109.50 358.67 L110.00 358.96 L110.50 358.28 L111.00 358.31 L111.50 357.76 L112.00 357.89 L112.50 356.28 L113.00 357.20 L113.50 357.13 L114.00 358.73 L114.50 358.60 L115.00 358.96 L115.50 359.27 L116.00 357.87 L116.50 358.89 L117.00 359.57 L117.50 358.09 L118.00 358.92 L118.50 357.98 L119.00 356.89 L119.50 358.19 L120.00 357.48 L120.50 358.18 L121.00 357.75 L121.50 358.34 L122.00 356.50 L122.50 359.66 L123.00 359.12 L123.50 357.84 L124.00 357.42 L124.50 358.10 L125.00 358.61 L125.50 358.42 L126.00 358.40 L126.50 356.62 L127.00 357.25 L127.50 359.11 L128.00 358.28 L128.50 356.96 L129.00 357.45 L129.50 357.01 L130.00 357.33 L130.50 358.99 L131.00 357.93 L131.50 358.95 L132.00 358.24 L132.50 356.96 L133.00 357.61 L133.50 359.84 L134.00 357.52 L134.50 357.30 L135.00 359.04 L135.50 358.17 L136.00 358.10 L136.50 359.22 L137.00 356.76 L137.50 358.42 L138.00 357.29 L138.50 357.03 L139.00 357.48 L139.50 358.98 L140.00 357.99 L140.50 356.70 L141.00 357.25 L141.50 359.27 L142.00 358.88 L142.50 357.26 L143.00 359.96 L143.50 357.82 L144.00 357.19 L144.50 358.00 L145.00 358.82 L145.50 359.33 L146.00 358.89 L146.50 357.77 L147.00 357.67 L147.50 356.98 L148.00 358.04 L148.50 357.64 L149.00 358.29 L149.50 357.13 L150.00 357.70 L150.50 357.42 L151.00 357.18 L151.50 357.19 L152.00 357.32 L152.50 357.19 L153.00 358.54 L153.50 358.18 L154.00 357.09 L154.50 358.49 L155.00 358.32 L155.50 359.22 L156.00 357.95 L156.50 357.94 L157.00 357.57 L157.50 358.20 L158.00 358.48 L158.50 358.23 L159.00 357.91 L159.50 358.53 L160.00 358.17 L160.50 358.29 L161.00 357.38 L161.50 358.26 L162.00 357.34 L162.50 357.45 L163.00 358.22 L163.50 359.72 L164.00 358.86 L164.50 358.10 L165.00 357.96 L165.50 358.86 L166.00 359.16 L166.50 359.04 L167.00 357.96 L167.50 358.24 L168.00 357.85 L168.50 357.88 L169.00 357.44 L169.50 357.91 L170.00 356.45 L170.50 357.18 L171.00 358.43 L171.50 357.39 L172.00 358.51 L172.50 357.11 L173.00 357.82 L173.50 358.40 L174.00 357.30 L174.50 357.55 L175.00 360.00 L175.50 357.58 L176.00 357.56 L176.50 357.66 L177.00 358.13 L177.50 358.08 L178.00 358.85 L178.50 358.71 L179.00 357.79 L179.50 357.83 L180.00 357.01 L180.50 356.95 L181.00 357.53 L181.50 358.66 L182.00 358.19 L182.50 358.72 L183.00 358.82 L183.50 357.97 L184.00 359.71 L184.50 357.70 L185.00 357.62 L185.50 357.77 L186.00 358.97 L186.50 358.00 L187.00 357.53 L187.50 358.43 L188.00 358.97 L188.50 358.01 L189.00 357.91 L189.50 358.93 L190.00 358.85 L190.50 358.82 L191.00 357.51 L191.50 358.32 L192.00 358.38 L192.50 356.72 L193.00 359.02 L193.50 358.18 L194.00 357.84 L194.50 359.84 L195.00 358.21 L195.50 357.55 L196.00 358.05 L196.50 358.53 L197.00 358.72 L197.50 358.06 L198.00 357.44 L198.50 357.57 L199.00 357.47 L199.50 357.29 L200.00 358.08 L200.50 357.72 L201.00 358.14 L201.50 357.47 L202.00 357.44 L202.50 357.96 L203.00 357.83 L203.50 358.98 L204.00 357.41 L204.50 358.26 L205.00 358.07 L205.50 357.10 L206.00 358.66 L206.50 358.23 L207.00 356.49 L207.50 358.56 L208.00 358.82 L208.50 357.49 L209.00 359.40 L209.50 358.22 L210.00 357.22 L210.50 358.53 L211.00 357.82 L211.50 357.08 L212.00 356.46 L212.50 358.29 L213.00 357.54 L213.50 358.59 L214.00 358.40 L214.50 357.70 L215.00 357.69 L215.50 359.45 L216.00 359.41 L216.50 358.68 L217.00 357.83 L217.50 357.35 L218.00 357.80 L218.50 359.37 L219.00 358.45 L219.50 357.88 L220.00 357.16 L220.50 358.23 L221.00 357.43 L221.50 358.11 L222.00 358.67 L222.50 358.92 L223.00 358.21 L223.50 357.84 L224.00 358.27 L224.50 359.48 L225.00 358.39 L225.50 357.03 L226.00 359.29 L226.50 358.29 L227.00 360.76 L227.50 357.74 L228.00 358.03 L228.50 357.87 L229.00 358.39 L229.50 357.66 L230.00 356.97 L230.50 356.63 L231.00 358.01 L231.50 357.71 L232.00 357.66 L232.50 359.72 L233.00 358.71 L233.50 358.93 L234.00 357.72 L234.50 358.33 L235.00 357.94 L235.50 357.94 L236.00 358.67 L236.50 358.56 L237.00 358.33 L237.50 358.21 L238.00 357.00 L238.50 357.54 L239.00 358.39 L239.50 357.82 L240.00 357.51 L240.50 358.37 L241.00 357.40 L241.50 357.59 L242.00 358.77 L242.50 357.83 L243.00 359.19 L243.50 358.50 L244.00 358.72 L244.50 358.96 L245.00 356.45 L245.50 358.04 L246.00 357.12 L246.50 357.75 L247.00 358.02 L247.50 359.05 L248.00 358.07 L248.50 359.35 L249.00 357.71 L249.50 358.06 L250.00 358.18 L250.50 358.83 L251.00 358.08 L251.50 357.65 L252.00 357.87 L252.50 357.06 L253.00 359.09 L253.50 358.71 L254.00 358.47 L254.50 358.36 L255.00 357.70 L255.50 357.85 L256.00 358.78 L256.50 357.57 L257.00 357.59 L257.50 359.38 L258.00 359.38 L258.50 358.42 L259.00 358.61 L259.50 358.35 L260.00 359.30 L260.50 357.88 L261.00 358.29 L261.50 358.60 L262.00 359.33 L262.50 358.05 L263.00 358.43 L263.50 357.88 L264.00 357.76 L264.50 357.77 L265.00 358.34 L265.50 358.97 L266.00 357.79 L266.50 357.88 L267.00 358.06 L267.50 358.66 L268.00 358.96 L268.50 357.53 L269.00 358.79 L269.50 357.82 L270.00 359.16 L270.50 357.95 L271.00 357.92 L271.50 358.27 L272.00 358.82 L272.50 358.18 L273.00 359.15 L273.50 359.17 L274.00 359.18 L274.50 359.39 L275.00 359.92 L275.50 358.79 L276.00 359.43 L276.50 359.49 L277.00 358.06 L277.50 359.99 L278.00 359.22 L278.50 359.36 L279.00 359.68 L279.50 360.21 L280.00 360.50 L280.50 360.74 L281.00 359.98 L281.50 361.15 L282.00 361.06 L282.50 360.59 L283.00 361.01 L283.50 361.77 L284.00 361.65 L284.50 362.01 L285.00 361.73 L285.50 362.68 L286.00 363.68 L286.50 362.53 L287.00 361.18 L287.50 363.88 L288.00 362.36 L288.50 361.97 L289.00 361.44 L289.50 363.76 L290.00 364.47 L290.50 364.62 L291.00 363.79 L291.50 365.40 L292.00 364.50 L292.50 364.39 L293.00 365.18 L293.50 365.60 L294.00 365.82 L294.50 366.44 L295.00 364.88 L295.50 368.10 L296.00 366.92 L296.50 368.28 L297.00 367.67 L297.50 368.88 L298.00 369.13 L298.50 368.59 L299.00 370.58 L299.50 371.27 L300.00 370.47 L300.50 370.25 L301.00 371.85 L301.50 372.21 L302.00 373.44 L302.50 373.86 L303.00 375.60 L303.50 375.39 L304.00 375.22 L304.50 376.07 L305.00 374.33 L305.50 376.38 L306.00 376.94 L306.50 378.14 L307.00 379.07 L307.50 379.61 L308.00 380.79 L308.50 380.21 L309.00 381.63 L309.50 381.98 L310.00 382.77 L310.50 383.71 L311.00 383.97 L311.50 385.05 L312.00 385.58 L312.50 387.08 L313.00 386.94 L313.50 387.97 L314.00 390.46 L314.50 389.79 L315.00 390.55 L315.50 391.89 L316.00 391.27 L316.50 393.56 L317.00 394.75 L317.50 395.80 L318.00 396.66 L318.50 397.83 L319.00 399.44 L319.50 399.60 L320.00 402.79 L320.50 404.44 L321.00 408.16 L321.50 409.72 L322.00 411.03 L322.50 416.51 L323.00 420.11 L323.50 426.03 L324.00 429.47 L324.50 424.27 L325.00 424.33 L325.50 424.36 L326.00 423.59 L326.50 425.53 L327.00 427.50 L327.50 429.60 L328.00 433.15 L328.50 437.20 L329.00 436.23 L329.50 432.01 L330.00 429.91 L330.50 428.01 L331.00 426.47 L331.50 425.65 L332.00 424.12 L332.50 424.48 L333.00 423.87 L333.50 424.14 L334.00 424.26 L334.50 424.71 L335.00 425.80 L335.50 427.22 L336.00 428.28 L336.50 430.85 L337.00 433.44 L337.50 438.41 L338.00 444.39 L338.50 439.86 L339.00 436.12 L339.50 431.59 L340.00 429.57 L340.50 427.07 L341.00 425.55 L341.50 425.78 L342.00 424.06 L342.50 423.23 L343.00 423.81 L343.50 422.92 L344.00 423.49 L344.50 424.66 L345.00 423.82 L345.50 424.59 L346.00 425.26 L346.50 425.88 L347.00 426.78 L347.50 429.07 L348.00 430.35 L348.50 433.43 L349.00 437.34 L349.50 442.35 L350.00 444.57 L350.50 438.37 L351.00 434.40 L351.50 431.39 L352.00 429.65 L352.50 426.37 L353.00 425.90 L353.50 425.11 L354.00 424.30 L354.50 424.48 L355.00 423.90 L355.50 423.78 L356.00 422.74 L356.50 422.98 L357.00 423.45 L357.50 423.38 L358.00 423.49 L358.50 424.00 L359.00 424.30 L359.50 424.42 L360.00 426.46 L360.50 426.24 L361.00 428.19 L361.50 429.93 L362.00 432.58 L362.50 435.28 L363.00 439.95 L363.50 447.62 L364.00 440.60 L364.50 434.44 L365.00 430.87 L365.50 429.45 L366.00 427.77 L366.50 426.55 L367.00 425.95 L367.50 424.58 L368.00 425.85 L368.50 424.61 L369.00 424.52 L369.50 423.80 L370.00 422.49 L370.50 423.55 L371.00 423.12 L371.50 423.68 L372.00 423.52 L372.50 424.07 L373.00 423.54 L373.50 424.12 L374.00 424.73 L374.50 424.94 L375.00 425.86 L375.50 427.45 L376.00 429.55 L376.50 430.49 L377.00 433.81 L377.50 436.79 L378.00 442.72 L378.50 444.49 L379.00 438.61 L379.50 433.59 L380.00 431.39 L380.50 429.03 L381.00 428.06 L381.50 426.76 L382.00 425.74 L382.50 424.66 L383.00 424.52 L383.50 423.63 L384.00 423.39 L384.50 422.70 L385.00 422.84 L385.50 422.78 L386.00 423.35 L386.50 423.52 L387.00 422.92 L387.50 423.71 L388.00 424.19 L388.50 424.77 L389.00 424.70 L389.50 425.44 L390.00 425.92 L390.50 427.62 L391.00 427.84 L391.50 430.73 L392.00 432.26 L392.50 438.20 L393.00 443.41 L393.50 443.30 L394.00 438.08 L394.50 433.42 L395.00 430.26 L395.50 428.80 L396.00 427.04 L396.50 426.87 L397.00 425.27 L397.50 424.37 L398.00 424.42 L398.50 424.31 L399.00 424.25 L399.50 423.90 L400.00 422.78 L400.50 423.02 L401.00 423.28 L401.50 422.97 L402.00 423.82 L402.50 423.40 L403.00 423.69 L403.50 423.76 L404.00 424.26 L404.50 423.89 L405.00 426.17 L405.50 425.55 L406.00 426.40 L406.50 427.15 L407.00 429.72 L407.50 431.52 L408.00 435.79 L408.50 441.07 L409.00 447.69 L409.50 440.26 L410.00 436.26 L410.50 432.11 L411.00 429.75 L411.50 428.06 L412.00 426.53 L412.50 426.04 L413.00 424.54 L413.50 423.76 L414.00 424.83 L414.50 423.59 L415.00 423.55 L415.50 423.73 L416.00 423.22 L416.50 422.80 L417.00 423.26 L417.50 422.94 L418.00 423.76 L418.50 423.41 L419.00 423.68 L419.50 424.43 L420.00 423.63 L420.50 424.09 L421.00 425.76 L421.50 426.79 L422.00 427.26 L422.50 428.31 L423.00 431.25 L423.50 433.69 L424.00 437.87 L424.50 442.06 L425.00 444.27 L425.50 437.84 L426.00 433.60 L426.50 431.45 L427.00 429.40 L427.50 427.29 L428.00 426.28 L428.50 426.26 L429.00 425.30 L429.50 424.46 L430.00 424.42 L430.50 423.95 L431.00 423.08 L431.50 423.30 L432.00 423.58 L432.50 423.68 L433.00 422.75 L433.50 422.98 L434.00 423.16 L434.50 422.81 L435.00 424.24 L435.50 424.12 L436.00 424.81 L436.50 423.44 L437.00 424.58 L437.50 426.48 L438.00 425.71 L438.50 426.62 L439.00 429.15 L439.50 431.94 L440.00 434.45 L440.50 437.87 L441.00 444.60 L441.50 443.16 L442.00 437.51 L442.50 433.64 L443.00 431.08 L443.50 429.26 L444.00 427.92 L444.50 426.73 L445.00 425.36 L445.50 423.95 L446.00 424.69 L446.50 423.35 L447.00 424.96 L447.50 423.08 L448.00 422.61 L448.50 422.51 L449.00 423.56 L449.50 423.50 L450.00 423.73 L450.50 423.63 L451.00 423.24 L451.50 424.20 L452.00 423.69 L452.50 423.61 L453.00 425.21 L453.50 425.57 L454.00 425.57 L454.50 426.89 L455.00 428.87 L455.50 430.68 L456.00 432.29 L456.50 437.03 L457.00 440.40 L457.50 445.85 L458.00 439.57 L458.50 434.80 L459.00 431.73 L459.50 428.61 L460.00 427.71 L460.50 426.83 L461.00 425.26 L461.50 425.14 L462.00 424.50 L462.50 423.10 L463.00 423.63 L463.50 424.01 L464.00 422.80 L464.50 423.47 L465.00 423.55 L465.50 422.72 L466.00 423.26 L466.50 423.90 L467.00 423.92 L467.50 423.23 L468.00 424.44 L468.50 424.38 L469.00 424.65 L469.50 425.81 L470.00 426.08 L470.50 426.77 L471.00 428.25 L471.50 429.73 L472.60 425.00 L473.00 403.70 L473.40 448.40 L473.80 430.00 L475.00 432.86 L475.50 430.20 L476.00 428.44 L476.50 426.58 L477.00 426.45 L477.50 425.39 L478.00 424.33 L478.50 424.52 L479.00 423.91 L479.50 423.82 L480.00 423.92 L480.50 424.85 L481.00 422.90 L481.50 423.57 L482.00 423.70 L482.50 423.60 L483.00 424.19 L483.50 423.35 L484.00 423.56 L484.50 423.92 L485.00 423.51 L485.50 425.08 L486.00 424.39 L486.50 425.88 L487.00 427.02 L487.50 427.12 L488.00 428.97 L488.50 431.08 L489.00 435.00 L489.50 438.49 L490.00 443.47 L490.50 443.50 L491.00 437.91 L491.50 432.49 L492.00 429.36 L492.50 430.01 L493.00 427.34 L493.50 425.20 L494.00 426.00 L494.50 425.61 L495.00 423.29 L495.50 424.77 L496.00 424.24 L496.50 423.68 L497.00 423.20 L497.50 423.64 L498.00 422.98 L498.50 423.42 L499.00 423.24 L499.50 423.21 L500.00 423.79 L500.50 424.14 L501.00 424.28 L501.50 424.30 L502.00 425.23 L502.50 424.19 L503.00 425.39 L503.50 426.17 L504.00 427.66 L504.50 427.28 L505.00 430.03 L505.50 432.69 L506.00 436.60 L506.50 442.81 L507.00 445.93 L507.50 439.34 L508.00 435.10 L508.50 432.19 L509.00 429.35 L509.50 428.64 L510.00 426.03 L510.50 426.38 L511.00 425.47 L511.50 425.13 L512.00 425.03 L512.50 423.86 L513.00 423.97 L513.50 423.73 L514.00 423.18 L514.50 423.02 L515.00 422.97 L515.50 423.77 L516.00 422.27 L516.50 422.85 L517.00 423.64 L517.50 424.41 L518.00 423.93 L518.50 424.89 L519.00 424.60 L519.50 424.85 L520.00 424.99 L520.50 426.72 L521.00 428.67 L521.50 429.48 L522.00 431.18 L522.50 435.17 L523.00 438.71 L523.50 445.25 L524.00 442.24 L524.50 436.70 L525.00 433.31 L525.50 430.35 L526.00 428.32 L526.50 427.12 L527.00 425.89 L527.50 425.85 L528.00 424.14 L528.50 423.43 L529.00 423.64 L529.50 424.27 L530.00 423.37 L530.50 422.36 L531.00 424.83 L531.50 422.90 L532.00 423.26 L532.50 423.69 L533.00 423.67 L533.50 423.53 L534.00 423.01 L534.50 424.26 L535.00 423.81 L535.50 424.60 L536.00 425.58 L536.50 425.70 L537.00 425.93 L537.50 427.78 L538.00 430.12 L538.50 432.60 L539.00 435.01 L539.50 440.52 L540.00 447.55 L540.50 441.04 L541.00 435.89 L541.50 432.36 L542.00 429.72 L542.50 428.38 L543.00 427.28 L543.50 425.90 L544.00 425.16 L544.50 425.65 L545.00 424.38 L545.50 423.71 L546.00 424.20 L546.50 423.07 L547.00 423.01 L547.50 423.90 L548.00 423.39 L548.50 423.73 L549.00 423.73 L549.50 423.00 L550.00 423.70 L550.50 423.36 L551.00 423.79 L551.50 423.99 L552.00 424.05 L552.50 423.76 L553.00 424.94 L553.50 425.31 L554.00 426.24 L554.50 426.37 L555.00 428.24 L555.50 429.77 L556.00 432.07 L556.50 435.55 L557.00 440.39 L557.50 446.72 L558.00 440.23 L558.50 435.44 L559.00 432.49 L559.50 429.76 L560.00 428.80 L560.50 427.14 L561.00 426.08 L561.50 425.34 L562.00 424.03 L562.50 424.52 L563.00 424.66 L563.50 423.31 L564.00 424.29 L564.50 423.81 L565.00 423.56 L565.50 423.15 L566.00 423.36 L566.50 423.00 L567.00 423.44 L567.50 423.58 L568.00 423.73 L568.50 423.29 L569.00 424.61 L569.50 424.16 L570.00 425.11 L570.50 425.78 L571.00 426.16 L571.50 428.51 L572.00 428.79 L572.50 430.92 L573.00 433.36 L573.50 437.56 L574.00 442.35 L574.50 444.66 L575.00 438.18 L575.50 433.91 L576.00 431.57 L576.50 429.53 L577.00 427.35 L577.50 425.95 L578.00 424.65 L578.50 424.54 L579.00 424.81 L579.50 424.53 L580.00 423.33 L580.50 423.77 L581.00 424.10 L581.50 423.10 L582.00 423.12 L582.50 422.91 L583.00 423.56 L583.50 422.47 L584.00 423.41 L584.50 423.82 L585.00 423.71 L585.50 424.42 L586.00 424.52 L586.50 424.32 L587.00 424.54 L587.50 425.12 L588.00 426.69 L588.50 427.49 L589.00 429.14 L589.50 430.75 L590.00 434.73 L590.50 438.79 L591.00 444.71 L591.50 442.42 L592.00 438.67 L592.50 433.89 L593.00 430.18 L593.50 429.20 L594.00 427.24 L594.50 425.88 L595.00 425.12 L595.50 425.16 L596.00 424.63 L596.50 424.25 L597.00 423.79 L597.50 423.20 L598.00 423.68 L598.50 423.32 L599.00 423.28 L599.50 423.65 L600.00 424.19 L600.50 423.11 L601.00 423.98 L601.50 423.28 L602.00 424.22 L602.50 424.35 L603.00 424.36 L603.50 424.84 L604.00 424.86 L604.50 425.76 L605.00 427.31 L605.50 428.48 L606.00 430.94 L606.50 431.77 L607.00 435.44 L607.50 440.55 L608.00 447.43 L608.50 440.26 L609.00 435.46 L609.50 432.21 L610.00 430.46 L610.50 428.05 L611.00 426.48 L611.50 426.08 L612.00 423.97 L612.50 424.31 L613.00 424.03 L613.50 424.19 L614.00 422.70 L614.50 423.53 L615.00 422.99 L615.50 423.90 L616.00 423.75 L616.50 423.13 L617.00 423.61 L617.50 422.88 L618.00 423.66 L618.50 423.83 L619.00 424.41 L619.50 423.94 L620.00 423.43 L620.50 425.31 L621.00 424.97 L621.50 426.00 L622.00 427.13 L622.50 429.54 L623.00 430.69 L623.50 434.05 L624.00 437.44 L624.50 442.29 L625.00 444.57 L625.50 438.62 L626.00 433.89 L626.50 430.43 L627.00 430.46 L627.50 428.60 L628.00 426.65 L628.50 425.86 L629.00 425.49 L629.50 424.86 L630.00 423.50 L630.50 423.27 L631.00 424.14 L631.50 424.25 L632.00 423.99 L632.50 423.80 L633.00 423.35 L633.50 423.82 L634.00 424.15 L634.50 423.73 L635.00 424.20 L635.50 424.33 L636.00 423.60 L636.50 424.79 L637.00 424.20 L637.50 424.58 L638.00 426.42 L638.50 425.65 L639.00 427.47 L639.50 429.52 L640.00 431.39 L640.50 433.98 L641.00 437.91 L641.50 444.59 L642.00 443.23 L642.50 437.36 L643.00 433.01 L643.50 430.01 L644.00 428.72 L644.50 427.27 L645.00 426.66 L645.50 425.33 L646.00 425.35 L646.50 423.89 L647.00 423.30 L647.50 424.34 L648.00 423.49 L648.50 423.14 L649.00 423.38 L649.50 422.79 L650.00 423.18 L650.50 422.70 L651.00 423.51 L651.50 423.24 L652.00 423.64" stroke="#2f8fe0" stroke-width="1.45"/>
</g>
<rect x="55" y="344" width="598" height="1" fill="#d8d8d8"/>
<rect x="55" y="460" width="598" height="1" fill="#d8d8d8"/>
<rect x="55" y="344" width="1" height="117" fill="#d8d8d8"/>
<rect x="652" y="344" width="1" height="117" fill="#d8d8d8"/>
<rect x="173" y="344" width="1" height="6" fill="#d8d8d8"/>
<rect x="173" y="455" width="1" height="6" fill="#d8d8d8"/>
<rect x="293" y="344" width="1" height="6" fill="#d8d8d8"/>
<rect x="293" y="455" width="1" height="6" fill="#d8d8d8"/>
<rect x="413" y="344" width="1" height="6" fill="#d8d8d8"/>
<rect x="413" y="455" width="1" height="6" fill="#d8d8d8"/>
<rect x="533" y="344" width="1" height="6" fill="#d8d8d8"/>
<rect x="533" y="455" width="1" height="6" fill="#d8d8d8"/>
<rect x="83" y="344" width="1" height="3" fill="#d8d8d8"/>
<rect x="83" y="458" width="1" height="3" fill="#d8d8d8"/>
<rect x="113" y="344" width="1" height="3" fill="#d8d8d8"/>
<rect x="113" y="458" width="1" height="3" fill="#d8d8d8"/>
<rect x="143" y="344" width="1" height="3" fill="#d8d8d8"/>
<rect x="143" y="458" width="1" height="3" fill="#d8d8d8"/>
<rect x="203" y="344" width="1" height="3" fill="#d8d8d8"/>
<rect x="203" y="458" width="1" height="3" fill="#d8d8d8"/>
<rect x="233" y="344" width="1" height="3" fill="#d8d8d8"/>
<rect x="233" y="458" width="1" height="3" fill="#d8d8d8"/>
<rect x="263" y="344" width="1" height="3" fill="#d8d8d8"/>
<rect x="263" y="458" width="1" height="3" fill="#d8d8d8"/>
<rect x="323" y="344" width="1" height="3" fill="#d8d8d8"/>
<rect x="323" y="458" width="1" height="3" fill="#d8d8d8"/>
<rect x="353" y="344" width="1" height="3" fill="#d8d8d8"/>
<rect x="353" y="458" width="1" height="3" fill="#d8d8d8"/>
<rect x="383" y="344" width="1" height="3" fill="#d8d8d8"/>
<rect x="383" y="458" width="1" height="3" fill="#d8d8d8"/>
<rect x="443" y="344" width="1" height="3" fill="#d8d8d8"/>
<rect x="443" y="458" width="1" height="3" fill="#d8d8d8"/>
<rect x="473" y="344" width="1" height="3" fill="#d8d8d8"/>
<rect x="473" y="458" width="1" height="3" fill="#d8d8d8"/>
<rect x="503" y="344" width="1" height="3" fill="#d8d8d8"/>
<rect x="503" y="458" width="1" height="3" fill="#d8d8d8"/>
<rect x="563" y="344" width="1" height="3" fill="#d8d8d8"/>
<rect x="563" y="458" width="1" height="3" fill="#d8d8d8"/>
<rect x="593" y="344" width="1" height="3" fill="#d8d8d8"/>
<rect x="593" y="458" width="1" height="3" fill="#d8d8d8"/>
<rect x="623" y="344" width="1" height="3" fill="#d8d8d8"/>
<rect x="623" y="458" width="1" height="3" fill="#d8d8d8"/>
<rect x="55" y="357" width="6" height="1" fill="#d8d8d8"/>
<rect x="647" y="357" width="6" height="1" fill="#d8d8d8"/>
<rect x="55" y="398" width="6" height="1" fill="#d8d8d8"/>
<rect x="647" y="398" width="6" height="1" fill="#d8d8d8"/>
<rect x="55" y="439" width="6" height="1" fill="#d8d8d8"/>
<rect x="647" y="439" width="6" height="1" fill="#d8d8d8"/>
<rect x="55" y="377" width="3" height="1" fill="#d8d8d8"/>
<rect x="650" y="377" width="3" height="1" fill="#d8d8d8"/>
<rect x="55" y="418" width="3" height="1" fill="#d8d8d8"/>
<rect x="650" y="418" width="3" height="1" fill="#d8d8d8"/>
<text x="173.5" y="474" font-size="10.67" fill="#d9d9d9" font-weight="700" text-anchor="middle" >4</text>
<text x="293.5" y="474" font-size="10.67" fill="#d9d9d9" font-weight="700" text-anchor="middle" >8</text>
<text x="413.5" y="474" font-size="10.67" fill="#d9d9d9" font-weight="700" text-anchor="middle" >12</text>
<text x="533.5" y="474" font-size="10.67" fill="#d9d9d9" font-weight="700" text-anchor="middle" >16</text>
<text x="50" y="361.2" font-size="10.67" fill="#d9d9d9" font-weight="700" text-anchor="end" >-50</text>
<text x="50" y="402.3" font-size="10.67" fill="#d9d9d9" font-weight="700" text-anchor="end" >-100</text>
<text x="50" y="443.3" font-size="10.67" fill="#d9d9d9" font-weight="700" text-anchor="end" >-150</text>
<text x="287.9" y="492" font-size="14" fill="#d9d9d9" font-weight="400" text-anchor="start" textLength="131.6" lengthAdjust="spacingAndGlyphs" >Frequency offset (kHz)</text>
<text transform="translate(19.2 401.9) rotate(-90)" x="0" y="0" font-size="14" fill="#d9d9d9" text-anchor="middle" textLength="125.6" lengthAdjust="spacingAndGlyphs">Phase Noise (dBc/Hz)</text>
<text x="56.33900000000003" y="346.1" font-size="10.5" fill="#2f8fe0" font-weight="400" text-anchor="middle" textLength="19.4" lengthAdjust="spacingAndGlyphs" stroke="#2f8fe0" stroke-width="0.35">SN1</text>
<path d="M49.94 349.2 L62.74 349.2 L56.34 359 Z" fill="#1c4e7e" stroke="#2f8fe0" stroke-width="1"/>
<text x="83.13000000000001" y="346.1" font-size="10.5" fill="#e8c94a" font-weight="400" text-anchor="middle" textLength="20.3" lengthAdjust="spacingAndGlyphs" stroke="#e8c94a" stroke-width="0.35">SN2</text>
<path d="M76.93 349.2 L89.73 349.2 L83.33 359 Z" fill="#1c4e7e" stroke="#2f8fe0" stroke-width="1"/>
<rect x="76.93" y="348.6" width="12.8" height="1" fill="#e8c94a"/>
<text x="353.24" y="413.2" font-size="10.5" fill="#2f8fe0" font-weight="400" text-anchor="middle" textLength="20.6" lengthAdjust="spacingAndGlyphs" stroke="#2f8fe0" stroke-width="0.2">SN3</text>
<path d="M346.84 416.6 L359.64 416.6 L353.24 424.6 Z" fill="#1c4e7e" stroke="#2f8fe0" stroke-width="1"/>
<rect x="0" y="503" width="672" height="24" fill="#ffffff"/>
<text x="26.4" y="519.8" font-size="13" fill="#222222" font-weight="400" text-anchor="start" textLength="73.5" lengthAdjust="spacingAndGlyphs" >Phase Noise</text>
<rect x="0" y="526.5" width="672" height="74" fill="#6e6e6e"/>
<rect x="1" y="527.5" width="670" height="72" fill="#141414"/>
<rect x="659" y="527.5" width="12" height="27" fill="#f3f3f3"/>
<rect x="654" y="555" width="17" height="28" fill="#f0f0f0"/>
<path d="M658.5 566.5 L666.5 566.5 L662.5 562 Z" fill="#b4b4b4"/>
<path d="M658.5 573.8 L666.5 573.8 L662.5 578.3 Z" fill="#555"/>
<rect x="1" y="553.8" width="658" height="1" fill="#7a7a7a"/>
<rect x="1" y="576.2" width="653" height="1" fill="#7a7a7a"/>
<rect x="165.0" y="527.5" width="1" height="55.5" fill="#7a7a7a"/>
<rect x="329.9" y="527.5" width="1" height="55.5" fill="#7a7a7a"/>
<rect x="494.1" y="527.5" width="1" height="55.5" fill="#7a7a7a"/>
<text x="169" y="546" font-size="12" fill="#e8e8e8" font-weight="700" text-anchor="start" textLength="22.3" lengthAdjust="spacingAndGlyphs" >SN1</text>
<text x="333.9" y="546" font-size="12" fill="#e8e8e8" font-weight="700" text-anchor="start" textLength="22.3" lengthAdjust="spacingAndGlyphs" >SN2</text>
<text x="498.2" y="546" font-size="12" fill="#e8e8e8" font-weight="700" text-anchor="start" textLength="22.3" lengthAdjust="spacingAndGlyphs" >SN3</text>
<text x="4.5" y="568.7" font-size="11" fill="#e8e8e8" font-weight="400" text-anchor="start" textLength="110" lengthAdjust="spacingAndGlyphs" >Frequency Offset (kHz)</text>
<text x="169" y="568.7" font-size="11" fill="#e8e8e8" font-weight="400" text-anchor="start" textLength="31.6" lengthAdjust="spacingAndGlyphs" >0.1000</text>
<text x="333.9" y="568.7" font-size="11" fill="#e8e8e8" font-weight="400" text-anchor="start" textLength="31.5" lengthAdjust="spacingAndGlyphs" >1.0000</text>
<text x="498.2" y="568.7" font-size="11" fill="#e8e8e8" font-weight="400" text-anchor="start" textLength="37.5" lengthAdjust="spacingAndGlyphs" >10.0000</text>
<rect x="1" y="583" width="653" height="16.5" fill="#f0f0f0"/>
<rect x="654" y="583" width="17" height="16.5" fill="#dcdcdc"/>
<rect x="18" y="585" width="614" height="12" fill="#c2c2c2"/>
<path d="M11 587.5 L11 595.5 L6.5 591.5 Z" fill="#b4b4b4"/>
<path d="M643.8 587.5 L643.8 595.5 L648.3 591.5 Z" fill="#555"/>
<rect x="0" y="600.5" width="672" height="23.5" fill="#ececec"/>
<rect x="0" y="600" width="672" height="1" fill="#9a9a9a"/>
<text x="7.5" y="617.25" font-size="12.5" fill="#333333" font-weight="400" text-anchor="start" textLength="33.3" lengthAdjust="spacingAndGlyphs" >Ready</text>
<text x="77.5" y="617.25" font-size="12.5" fill="#333333" font-weight="400" text-anchor="start" textLength="85" lengthAdjust="spacingAndGlyphs" >ΔT=46.4399 ms</text>
<text x="169.7" y="617.25" font-size="12.5" fill="#333333" font-weight="400" text-anchor="start" textLength="121.1" lengthAdjust="spacingAndGlyphs" >Samples/Update=2048</text>
<text x="298.1" y="617.25" font-size="12.5" fill="#333333" font-weight="400" text-anchor="start" textLength="111.4" lengthAdjust="spacingAndGlyphs" >VBW=380.7906 mHz</text>
<text x="416.2" y="617.25" font-size="12.5" fill="#333333" font-weight="400" text-anchor="start" textLength="95.1" lengthAdjust="spacingAndGlyphs" >RBW=21.5332 Hz</text>
<svg x="0" y="600" width="650.5" height="24"><text x="518.2" y="17.25" font-size="12.5" fill="#333333" textLength="142.3" lengthAdjust="spacingAndGlyphs">Sample Rate=44.1000 kHz</text></svg>
<path d="M655.8 609.3 L668 609.3 L661.9 614 Z" fill="#8e8e8e"/><rect x="655.8" y="615.6" width="12.2" height="1.8" fill="#8e8e8e"/>
</svg>
</body></html>
